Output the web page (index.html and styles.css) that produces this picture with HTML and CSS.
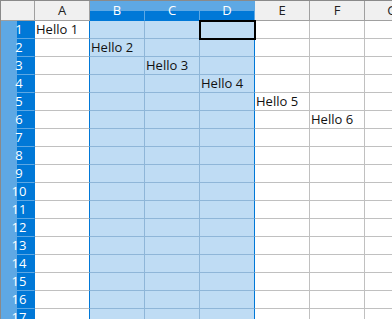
FILE: index.html
```html
<!DOCTYPE html>
<html>
<head>
  <title>Sheet1</title>
  <link rel="stylesheet" href="styles.css">
</head>
<body>
  <div class="sheet" id="sheet"></div>

  <script>
    const cols = ['A', 'B', 'C', 'D', 'E', 'F', 'G'];
    const selected = ['B', 'C', 'D'];
    const values = { 'A1': 'Hello 1', 'B2': 'Hello 2', 'C3': 'Hello 3', 'D4': 'Hello 4', 'E5': 'Hello 5', 'F6': 'Hello 6' };
    const sheet = document.getElementById('sheet');

    let html = '<div class="corner"></div>';
    cols.forEach(c => {
      html += `<div class="col-head${selected.includes(c) ? ' sel' : ''}">${c}</div>`;
    });

    for (let r = 1; r <= 17; r++) {
      html += `<div class="row-head">${r}</div>`;
      cols.forEach(c => {
        let cls = 'cell';
        if (selected.includes(c)) cls += ' sel';
        if (c === 'A') cls += ' before-sel';
        if (c === 'D') cls += ' last-sel';
        if (c + r === 'D1') cls += ' cursor';
        html += `<div class="${cls}">${values[c + r] || ''}</div>`;
      });
    }
    sheet.innerHTML = html;
  </script>
</body>
</html>
```

FILE: styles.css
```css
html, body {
  margin: 0;
  background: #fff;
  overflow: hidden;
}
.sheet {
  display: grid;
  grid-template-columns: 34px repeat(7, 55px);
  grid-template-rows: 20px;
  grid-auto-rows: 18px;
  font-family: "Open Sans", sans-serif;
  font-size: 13px;
  border-left: 1px solid #8a8a8a;
  border-top: 1px solid #8a8a8a;
  width: 420px;
}
.corner, .col-head, .row-head, .cell {
  box-sizing: border-box;
}
.corner {
  background: #f0f0f0;
  border-right: 1px solid #a0a0a0;
  border-bottom: 1px solid #a0a0a0;
}
.col-head {
  background: #f0f0f0;
  color: #222;
  text-align: center;
  line-height: 19px;
  border-right: 1px solid #a0a0a0;
  border-bottom: 1px solid #a0a0a0;
}
.col-head.sel {
  background: linear-gradient(#5ea8e4 0, #5ea8e4 10px, #0078d7 10px);
  color: #fff;
  border-right-color: #5ea8e4;
  border-bottom-color: #0078d7;
}
.row-head {
  background: linear-gradient(to right, #5ea8e4 0, #5ea8e4 16px, #0078d7 16px);
  color: #fff;
  text-align: center;
  padding-left: 3px;
  line-height: 17px;
  border-right: 1px solid #0078d7;
  border-bottom: 1px solid #5ea8e4;
}
.cell {
  padding-left: 1px;
  line-height: 17px;
  white-space: nowrap;
  color: #111;
  border-right: 1px solid #c0c0c0;
  border-bottom: 1px solid #c0c0c0;
}
.cell.sel {
  background: #bfdcf4;
  border-right-color: #8fb6d8;
  border-bottom-color: #8fb6d8;
}
.cell.before-sel, .cell.last-sel {
  border-right-color: #0078d7;
}
.cell.cursor {
  position: relative;
  z-index: 1;
  outline: 2px solid #000;
  outline-offset: -1px;
}
```
